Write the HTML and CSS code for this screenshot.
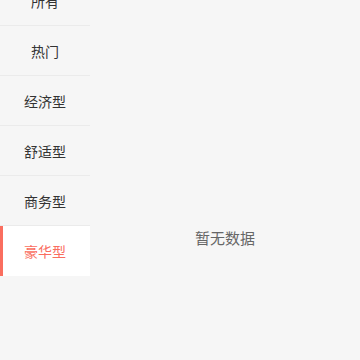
FILE: index.html
```html
<!DOCTYPE html>
<html lang="zh">
<head>
<meta charset="utf-8">
<link rel="stylesheet" href="styles.css">
</head>
<body>
<div class="page">
  <ul class="sidebar">
    <li class="item">所有</li>
    <li class="item">热门</li>
    <li class="item">经济型</li>
    <li class="item">舒适型</li>
    <li class="item">商务型</li>
    <li class="item active">豪华型</li>
  </ul>
  <div class="content">
    <p class="empty">暂无数据</p>
  </div>
</div>
</body>
</html>
```
FILE: styles.css
```css
html, body {
  margin: 0;
  padding: 0;
  background: #f6f6f6;
  font-family: "Noto Sans CJK SC", "Noto Sans", sans-serif;
}
.page {
  display: flex;
  width: 360px;
  height: 360px;
  overflow: hidden;
}
.sidebar {
  list-style: none;
  margin: -24px 0 0 0;
  padding: 0;
  width: 90px;
  flex: none;
}
.item {
  height: 50px;
  box-sizing: border-box;
  display: flex;
  align-items: center;
  justify-content: center;
  font-size: 14px;
  color: #333;
  border-bottom: 1px solid #ebebeb;
}
.item.active {
  background: #fff;
  color: #fa6e5f;
  border-left: 3px solid #fa6e5f;
  border-bottom: none;
  padding-right: 3px;
}
.content {
  flex: 1;
  text-align: center;
}
.empty {
  margin: 227px 0 0 0;
  font-size: 15px;
  line-height: 22px;
  color: #666;
}
```
